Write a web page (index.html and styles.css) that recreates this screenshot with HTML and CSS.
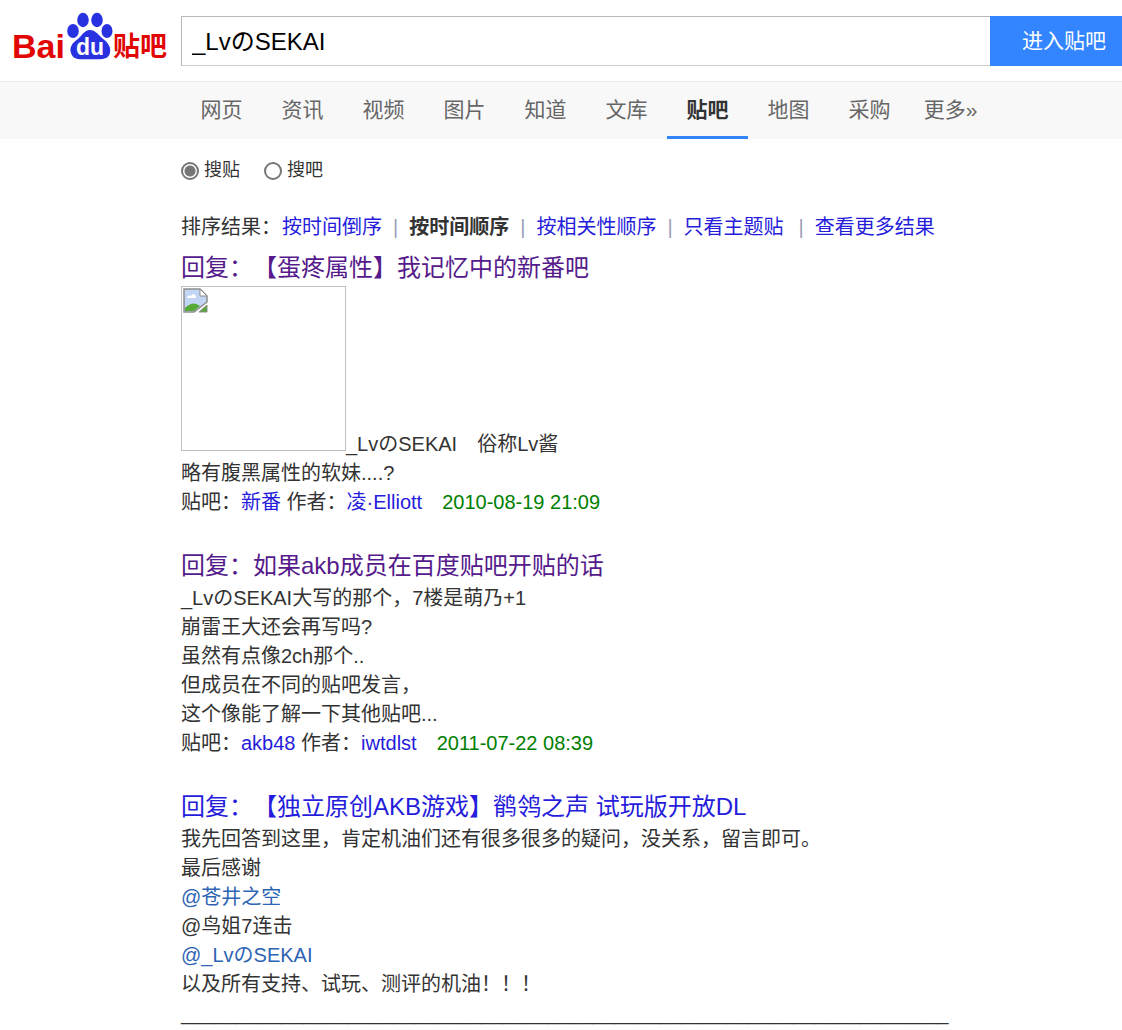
FILE: index.html
```html
<!DOCTYPE html>
<html lang="zh-CN">
<head>
<meta charset="utf-8">
<title>百度贴吧搜索 - _LvのSEKAI</title>
<link rel="stylesheet" href="styles.css">
</head>
<body>
<header class="header">
  <a class="logo" href="#" aria-label="百度贴吧">
    <svg class="logo-art" viewBox="0 0 154 50" width="154" height="50">
      <text class="logo-word" x="-2" y="46">Bai</text>
      <g class="logo-paw">
        <ellipse cx="59" cy="19" rx="5.800" ry="7"/>
        <ellipse cx="69" cy="8" rx="5.800" ry="7.200"/>
        <ellipse cx="83" cy="8" rx="5.800" ry="7.200"/>
        <ellipse cx="93" cy="19" rx="5.500" ry="7"/>
        <path d="M76 18C70 18 68 24 62 28.500C57 32 55.500 37 57 41C58.500 46 62 47.300 68 47.300H84C91 47.300 94.500 46 96 41C97 36 95 32 91 28.500C85 24 82 18 76 18Z"/>
      </g>
      <text class="logo-du" x="62" y="43">du</text>
      <text class="logo-bar" x="99" y="44">贴吧</text>
    </svg>
  </a>
  <form class="search">
    <input class="search-input" type="text" aria-label="搜索" value="_LvのSEKAI">
    <button class="search-button" type="button">进入贴吧</button>
  </form>
</header>

<nav class="tabs">
  <a class="tab" href="#">网页</a>
  <a class="tab" href="#">资讯</a>
  <a class="tab" href="#">视频</a>
  <a class="tab" href="#">图片</a>
  <a class="tab" href="#">知道</a>
  <a class="tab" href="#">文库</a>
  <a class="tab tab-current" href="#">贴吧</a>
  <a class="tab" href="#">地图</a>
  <a class="tab" href="#">采购</a>
  <a class="tab" href="#">更多»</a>
</nav>

<main class="content">
  <div class="scope">
    <label class="scope-option"><input class="scope-radio" type="radio" name="scope" checked>搜贴</label>
    <label class="scope-option"><input class="scope-radio" type="radio" name="scope">搜吧</label>
  </div>

  <div class="sort">
    <span class="sort-label">排序结果：</span>
    <a class="link" href="#">按时间倒序</a>
    <span class="sort-divider">|</span>
    <strong>按时间顺序</strong>
    <span class="sort-divider">|</span>
    <a class="link" href="#">按相关性顺序</a>
    <span class="sort-divider">|</span>
    <a class="link" href="#">只看主题贴</a>
    <span class="sort-divider sort-divider-wide">|</span>
    <a class="link" href="#">查看更多结果</a>
  </div>

  <article class="post">
    <h2 class="post-title"><a class="link link-visited" href="#">回复：【蛋疼属性】我记忆中的新番吧</a></h2>
    <p class="post-text"><svg class="missing-picture" viewBox="0 0 163 163" role="img" aria-label="图片">
      <path d="M2 2H18L25 9V15L12 25H2Z" fill="#c3d5f5" stroke="#8d8d8d" stroke-width="1.500"/>
      <path d="M5 11C5 8 8 8 9 9C10 6 14 7 14 10V11Z" fill="#fff"/>
      <path d="M3 24V21Q11 13 18 19L12 24Z" fill="#55aa35"/>
      <path d="M18 2V9H25Z" fill="#fff" stroke="#8d8d8d"/>
      <path d="M25 18V25H17Z" fill="#55aa35" stroke="#8d8d8d"/>
    </svg>_LvのSEKAI　俗称Lv酱<br>略有腹黑属性的软妹....?</p>
    <p class="post-meta">贴吧：<a class="link" href="#">新番</a> 作者：<a class="link" href="#">凌·Elliott</a><time class="post-date">2010-08-19 21:09</time></p>
  </article>

  <article class="post">
    <h2 class="post-title"><a class="link link-visited" href="#">回复：如果akb成员在百度贴吧开贴的话</a></h2>
    <p class="post-text">_LvのSEKAI大写的那个，7楼是萌乃+1<br>崩雷王大还会再写吗?<br>虽然有点像2ch那个..<br>但成员在不同的贴吧发言，<br>这个像能了解一下其他贴吧...</p>
    <p class="post-meta">贴吧：<a class="link" href="#">akb48</a> 作者：<a class="link" href="#">iwtdlst</a><time class="post-date">2011-07-22 08:39</time></p>
  </article>

  <article class="post">
    <h2 class="post-title"><a class="link" href="#">回复：【独立原创AKB游戏】鹡鸰之声 试玩版开放DL</a></h2>
    <p class="post-text">我先回答到这里，肯定机油们还有很多很多的疑问，没关系，留言即可。<br>最后感谢<br><a class="mention" href="#">@苍井之空</a><br>@鸟姐7连击<br><a class="mention" href="#">@_LvのSEKAI</a><br>以及所有支持、试玩、测评的机油！！！<br>_____________________________________________________________________</p>
  </article>
</main>
</body>
</html>
```
FILE: styles.css
```css
* {
  box-sizing: border-box;
}

body {
  margin: 0;
  background: #fff;
  color: #333;
  font: 20px/29px "Liberation Sans", "Noto Sans CJK SC", sans-serif;
  text-spacing-trim: space-all;
}

a {
  text-decoration: none;
}

.header {
  display: flex;
  align-items: flex-start;
  gap: 13px;
  padding: 12px 0 15px 14px;
}

.logo {
  display: block;
  flex: none;
}

.logo-art {
  display: block;
  overflow: visible;
}

.logo-word {
  fill: #e10602;
  font-size: 34px;
  font-weight: bold;
}

.logo-paw {
  fill: #2932e1;
}

.logo-du {
  fill: #fff;
  font-size: 23px;
  font-weight: bold;
}

.logo-bar {
  fill: #e10602;
  font-size: 27px;
  font-weight: bold;
}

.search {
  display: flex;
  flex: 1;
  height: 50px;
  margin: 4px 0 0;
}

.search-input {
  flex: 1;
  min-width: 0;
  padding: 0 10px 4px;
  border: 1px solid #b8b8b8;
  border-right: 0;
  border-bottom-color: #ccc;
  outline: 0;
  background: #fff;
  color: #000;
  font: 24px "Liberation Sans", "Noto Sans CJK SC", sans-serif;
}

.search-button {
  flex: none;
  padding: 0 16px 4px 32px;
  border: 0;
  background: #3385ff;
  color: #fff;
  font: 21px "Liberation Sans", "Noto Sans CJK SC", sans-serif;
}

.tabs {
  display: flex;
  height: 58px;
  padding-left: 181px;
  border-top: 1px solid #ebebeb;
  background: #f8f8f8;
}

.tab {
  min-width: 81px;
  padding: 13px 13px 12px;
  color: #666;
  font-size: 21px;
  text-align: center;
  white-space: nowrap;
}

.tab-current {
  border-bottom: 3px solid #3385ff;
  color: #333;
  font-weight: bold;
}

.content {
  padding-left: 181px;
}

.scope {
  display: flex;
  gap: 24px;
  padding: 17px 0;
  font-size: 18px;
}

.scope-option {
  display: flex;
  align-items: center;
  gap: 5px;
}

.scope-radio {
  appearance: none;
  width: 18px;
  height: 18px;
  margin: 0;
  border: 2px solid #767676;
  border-radius: 50%;
  background: #fff;
}

.scope-radio:checked {
  background: radial-gradient(circle, #767676 5px, #fff 6px);
}

.sort {
  display: flex;
  flex-wrap: wrap;
  gap: 11px;
  padding: 11px 0 8px;
}

.sort-label {
  margin-right: -10px;
}

.sort-divider {
  color: #9a9fb8;
}

.sort-divider-wide {
  margin-left: 4px;
}

.post {
  margin-bottom: 31px;
}

.post:last-child {
  margin-bottom: 0;
}

.post-title {
  margin: 0;
  font-size: 24px;
  font-weight: normal;
  line-height: 36px;
}

.post-text,
.post-meta {
  margin: 0;
}

.missing-picture {
  width: 165px;
  height: 165px;
  border: 1px solid #c0c0c0;
}

.link {
  color: #261cdc;
}

.link-visited {
  color: #551a8b;
}

.mention {
  color: #2d64b3;
}

.post-date {
  margin-left: 20px;
  color: #008000;
}
```
